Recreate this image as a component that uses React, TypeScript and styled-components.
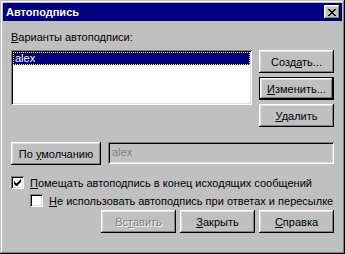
import React from "react"
import styled, { createGlobalStyle } from "styled-components"

const GlobalStyle = createGlobalStyle`
  html, body {
    margin: 0;
    padding: 0;
    background: #c0c0c0;
  }
  body {
    font-family: "Liberation Sans", Arial, sans-serif;
    font-size: 11px;
    color: #000;
  }
`

const Window = styled.div`
  width: 345px;
  height: 254px;
  box-sizing: border-box;
  padding: 3px;
  background: #c0c0c0;
  box-shadow: inset -1px -1px #000, inset 1px 1px #c0c0c0,
    inset -2px -2px #808080, inset 2px 2px #fff;
  display: flex;
  flex-direction: column;
`

const TitleBar = styled.div`
  height: 18px;
  background: #000080;
  display: flex;
  align-items: center;
  justify-content: space-between;
  padding: 0 2px 0 3px;
`

const Title = styled.span`
  color: #fff;
  font-weight: bold;
  font-size: 11px;
`

const CloseButton = styled.div`
  width: 16px;
  height: 14px;
  background: #c0c0c0;
  box-shadow: inset -1px -1px #000, inset 1px 1px #fff,
    inset -2px -2px #808080, inset 2px 2px #dfdfdf;
  display: flex;
  align-items: center;
  justify-content: center;
`

const Body = styled.div`
  padding: 10px 8px 0 8px;
  display: flex;
  flex-direction: column;
`

const TopSection = styled.div`
  display: grid;
  grid-template-columns: 241px 75px;
  grid-template-rows: 13px auto;
  column-gap: 7px;
  row-gap: 6px;
`

const Label = styled.div`
  line-height: 13px;
  white-space: nowrap;
`

const ListBox = styled.div`
  height: 55px;
  box-sizing: border-box;
  background: #fff;
  padding: 2px;
  box-shadow: inset 1px 1px #808080, inset -1px -1px #fff,
    inset 2px 2px #000, inset -2px -2px #dfdfdf;
`

const ListItem = styled.div<{ $selected?: boolean }>`
  height: 13px;
  line-height: 11px;
  box-sizing: border-box;
  padding-left: 1px;
  background: ${(p) => (p.$selected ? "#000080" : "transparent")};
  color: ${(p) => (p.$selected ? "#fff" : "#000")};
  border: 1px dotted ${(p) => (p.$selected ? "#ffff00" : "transparent")};
`

const ButtonColumn = styled.div`
  display: flex;
  flex-direction: column;
  gap: 4px;
`

const Button = styled.div<{ $width?: number; $default?: boolean; $disabled?: boolean }>`
  width: ${(p) => p.$width ?? 75}px;
  height: 23px;
  box-sizing: border-box;
  display: flex;
  align-items: center;
  justify-content: center;
  background: #c0c0c0;
  white-space: nowrap;
  color: ${(p) => (p.$disabled ? "#808080" : "#000")};
  text-shadow: ${(p) => (p.$disabled ? "1px 1px 0 #fff" : "none")};
  border: ${(p) => (p.$default ? "1px solid #000" : "none")};
  box-shadow: inset -1px -1px #000, inset 1px 1px #fff,
    inset -2px -2px #808080, inset 2px 2px #dfdfdf;
`

const DefaultRow = styled.div`
  margin-top: 15px;
  display: flex;
  gap: 7px;
`

const TextBox = styled.div`
  flex: 1;
  height: 22px;
  box-sizing: border-box;
  padding: 3px 4px;
  line-height: 14px;
  color: #808080;
  background: #c0c0c0;
  box-shadow: inset 1px 1px #808080, inset -1px -1px #fff,
    inset 2px 2px #000, inset -2px -2px #dfdfdf;
`

const CheckRow = styled.div<{ $indent?: number }>`
  display: flex;
  align-items: center;
  gap: 6px;
  height: 13px;
  margin-left: ${(p) => p.$indent ?? 0}px;
  white-space: nowrap;
`

const CheckBox = styled.div`
  width: 13px;
  height: 13px;
  flex-shrink: 0;
  box-sizing: border-box;
  background: #fff;
  box-shadow: inset 1px 1px #808080, inset -1px -1px #fff,
    inset 2px 2px #000, inset -2px -2px #dfdfdf;
  display: flex;
  align-items: center;
  justify-content: center;
`

const Checks = styled.div`
  margin-top: 11px;
  display: flex;
  flex-direction: column;
  gap: 5px;
`

const BottomBar = styled.div`
  margin-top: 3px;
  display: flex;
  justify-content: flex-end;
  gap: 4px;
`

const CheckMark = () => (
  <svg width="7" height="7" viewBox="0 0 7 7">
    <path d="M0 2v3l2 2h1l4-4V0L2.5 4.5z" fill="#000" />
  </svg>
)

const CloseIcon = () => (
  <svg width="8" height="7" viewBox="0 0 8 7" shapeRendering="crispEdges">
    <path
      d="M0 0h2v1h1v1h2V1h1V0h2v1H7v1H6v1H5v1h1v1h1v1h1v1H6V6H5V5H3v1H2v1H0V6h1V5h1V4h1V3H2V2H1V1H0z"
      fill="#000"
    />
  </svg>
)

const App: React.FC = () => {
  return (
    <>
      <GlobalStyle />
      <Window>
        <TitleBar>
          <Title>Автоподпись</Title>
          <CloseButton>
            <CloseIcon />
          </CloseButton>
        </TitleBar>
        <Body>
          <TopSection>
            <Label>
              <u>В</u>арианты автоподписи:
            </Label>
            <span />
            <ListBox>
              <ListItem $selected>alex</ListItem>
            </ListBox>
            <ButtonColumn>
              <Button>
                <span>
                  Созд<u>а</u>ть...
                </span>
              </Button>
              <Button $default>
                <span>
                  <u>И</u>зменить...
                </span>
              </Button>
              <Button>
                <span>
                  <u>У</u>далить
                </span>
              </Button>
            </ButtonColumn>
          </TopSection>
          <DefaultRow>
            <Button $width={90}>
              <span>
                По <u>у</u>молчанию
              </span>
            </Button>
            <TextBox>alex</TextBox>
          </DefaultRow>
          <Checks>
            <CheckRow>
              <CheckBox>
                <CheckMark />
              </CheckBox>
              <span>
                <u>П</u>омещать автоподпись в конец исходящих сообщений
              </span>
            </CheckRow>
            <CheckRow $indent={19}>
              <CheckBox />
              <span>
                <u>Н</u>е использовать автоподпись при ответах и пересылке
              </span>
            </CheckRow>
          </Checks>
          <BottomBar>
            <Button $disabled>
              <span>
                Вс<u>т</u>авить
              </span>
            </Button>
            <Button>
              <span>
                <u>З</u>акрыть
              </span>
            </Button>
            <Button>
              <span>
                <u>С</u>правка
              </span>
            </Button>
          </BottomBar>
        </Body>
      </Window>
    </>
  )
}

export default App
